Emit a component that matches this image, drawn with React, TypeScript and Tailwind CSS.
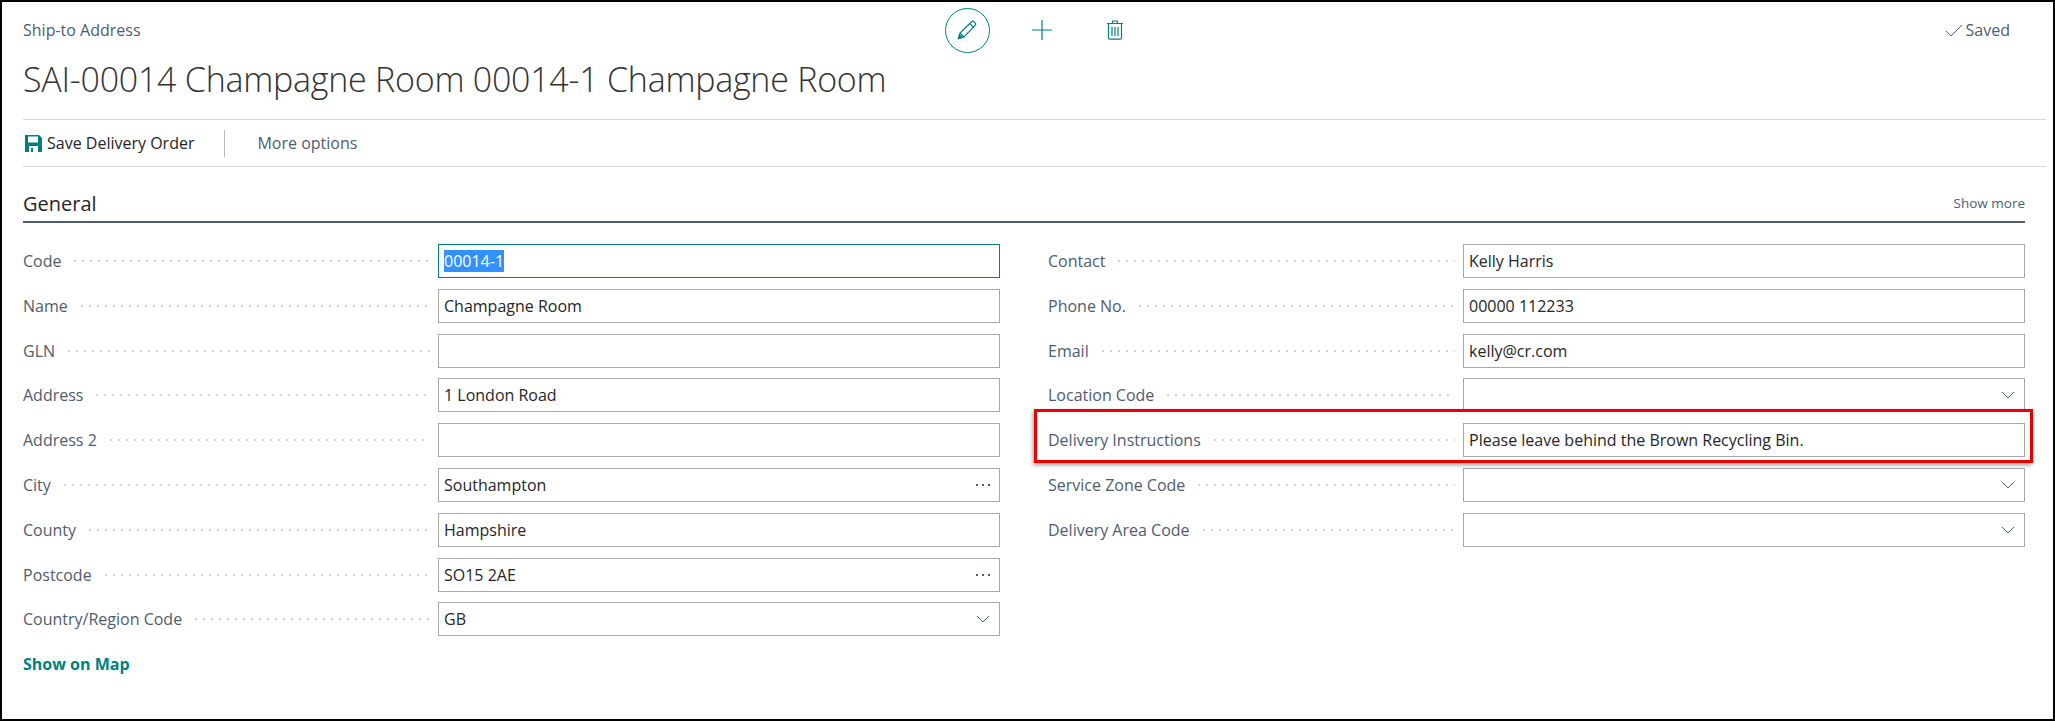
const FONT = "font-['Open_Sans','Noto_Sans',sans-serif]";

interface Field {
  label: string;
  value?: string;
  kind?: 'text' | 'lookup' | 'select';
  selected?: boolean;
}

const LEFT_FIELDS: Field[] = [
  { label: 'Code', value: '00014-1', selected: true },
  { label: 'Name', value: 'Champagne Room' },
  { label: 'GLN' },
  { label: 'Address', value: '1 London Road' },
  { label: 'Address 2' },
  { label: 'City', value: 'Southampton', kind: 'lookup' },
  { label: 'County', value: 'Hampshire' },
  { label: 'Postcode', value: 'SO15 2AE', kind: 'lookup' },
  { label: 'Country/Region Code', value: 'GB', kind: 'select' },
];

const RIGHT_FIELDS: Field[] = [
  { label: 'Contact', value: 'Kelly Harris' },
  { label: 'Phone No.', value: '00000 112233' },
  { label: 'Email', value: 'kelly@cr.com' },
  { label: 'Location Code', kind: 'select' },
  { label: 'Delivery Instructions', value: 'Please leave behind the Brown Recycling Bin.' },
  { label: 'Service Zone Code', kind: 'select' },
  { label: 'Delivery Area Code', kind: 'select' },
];

function Chevron() {
  return (
    <svg width="14" height="8" viewBox="0 0 14 8" fill="none" stroke="#505c6d" strokeWidth="1" className="shrink-0">
      <path d="M1 1l6 6 6-6" />
    </svg>
  );
}

function Ellipsis() {
  return (
    <svg width="14" height="2" viewBox="0 0 14 2" fill="#505c6d" className="shrink-0">
      <rect x="0" y="0" width="2" height="2" />
      <rect x="6" y="0" width="2" height="2" />
      <rect x="12" y="0" width="2" height="2" />
    </svg>
  );
}

function FieldRow({ field }: { field: Field }) {
  const { label, value, kind = 'text', selected } = field;
  return (
    <div className="flex h-[34px] items-center">
      <div className="flex w-[415px] shrink-0 items-center pr-[8px]">
        <span className="text-[16px] text-[#505c6d] whitespace-nowrap">{label}</span>
        <span className="ml-[10px] h-[2px] flex-1 bg-[radial-gradient(circle,#cfd2d6_1px,transparent_1px)] bg-[length:8px_2px]" />
      </div>
      <div
        className={`flex h-[34px] flex-1 items-center justify-between border pl-[5px] pr-[9px] text-[16px] text-[#262626] ${
          selected ? 'border-[#00807f]' : 'border-[#a8a8a8]'
        }`}
      >
        {selected ? <span className="bg-[#3390ff] text-white leading-[22px]">{value}</span> : <span>{value}</span>}
        {kind === 'lookup' && <Ellipsis />}
        {kind === 'select' && <Chevron />}
      </div>
    </div>
  );
}

export default function App() {
  return (
    <div className={`${FONT} box-border flex h-[721px] w-[2055px] flex-col border-2 border-black bg-white pl-[21px] pr-[7px]`}>
      {/* Header */}
      <div className="flex h-[56px] items-center">
        <span className="w-[921.5px] text-[16px] text-[#505c6d]">Ship-to Address</span>
        <div className="flex h-[45px] w-[45px] items-center justify-center rounded-full border border-[#00807f]">
          <svg width="20" height="20" viewBox="0 0 20 20" fill="none" stroke="#00807f" strokeWidth="1.2">
            <path d="M1.5 18.5l1.5-5.5L14.5 1.8c.8-.7 1.9-.7 2.6 0l1 1c.7.8.7 1.9 0 2.6L7 16.9z" />
            <path d="M3 13l4 4M12.8 3.5l3.8 3.8" />
            <path d="M1.5 18.5l1-3.6 2.6 2.6z" fill="#00807f" />
          </svg>
        </div>
        <svg width="20" height="20" viewBox="0 0 20 20" fill="none" stroke="#00807f" strokeWidth="1.2" className="ml-[42px]">
          <path d="M10 0v20M0 10h20" />
        </svg>
        <svg width="16" height="20" viewBox="0 0 16 20" fill="none" stroke="#00807f" strokeWidth="1.2" className="ml-[55px]">
          <path d="M0 3.5h16M5.5 3.5V1h5v2.5" />
          <path d="M1.5 3.5V18a1.2 1.2 0 0 0 1.2 1.2h10.6a1.2 1.2 0 0 0 1.2-1.2V3.5" />
          <path d="M5 7v9M8 7v9M11 7v9" />
        </svg>
        <div className="ml-auto mr-[36px] flex items-center gap-[3px]">
          <svg width="18" height="13" viewBox="0 0 18 13" fill="none" stroke="#505c6d" strokeWidth="1">
            <path d="M1 7l5 5L17 1" />
          </svg>
          <span className="text-[16px] text-[#505c6d]">Saved</span>
        </div>
      </div>

      <h1 className="flex h-[62px] items-center border-b border-[#d8d8dc] pb-[18px] text-[34px] font-light tracking-[-0.25px] text-[#333333]">
        SAI-00014 Champagne Room 00014-1 Champagne Room
      </h1>

      {/* Action bar */}
      <div className="flex h-[47px] items-center border-b border-[#d8d8dc]">
        <svg width="19" height="19" viewBox="0 0 19 19" className="ml-[1px]">
          <path d="M1 1h14l3 3v14H1z" fill="#00807f" />
          <rect x="4" y="2.5" width="10" height="6" fill="#fff" />
          <rect x="5" y="12" width="9" height="6" fill="#fff" />
          <rect x="7" y="14" width="2" height="4" fill="#00807f" />
        </svg>
        <span className="ml-[4px] text-[16px] text-[#262626]">Save Delivery Order</span>
        <div className="ml-[30px] h-[27px] w-px bg-[#b8bcc2]" />
        <span className="ml-[32px] text-[16px] text-[#505c6d]">More options</span>
      </div>

      {/* General */}
      <div className="mr-[21px] mt-[21px] flex h-[35px] items-center justify-between border-b-2 border-[#505c6d] pb-[2px]">
        <span className="text-[20px] font-medium text-[#262626]">General</span>
        <span className="text-[13.5px] text-[#505c6d]">Show more</span>
      </div>

      <div className="mr-[21px] mt-[21px] grid grid-cols-2 gap-x-[48px]">
        <div className="flex flex-col gap-[10.8px]">
          {LEFT_FIELDS.map(f => (
            <FieldRow key={f.label} field={f} />
          ))}
          <span className="mt-[5px] text-[16px] font-bold text-[#00807f]">Show on Map</span>
        </div>
        <div className="relative flex flex-col gap-[10.8px]">
          {RIGHT_FIELDS.map(f => (
            <FieldRow key={f.label} field={f} />
          ))}
          {/* Red callout */}
          <div className="absolute left-[-14px] right-[-8px] top-[165px] h-[54px] border-[3px] border-[#e60000] shadow-[-1px_2px_4px_rgba(0,0,0,0.4)] pointer-events-none" />
        </div>
      </div>
    </div>
  );
}
